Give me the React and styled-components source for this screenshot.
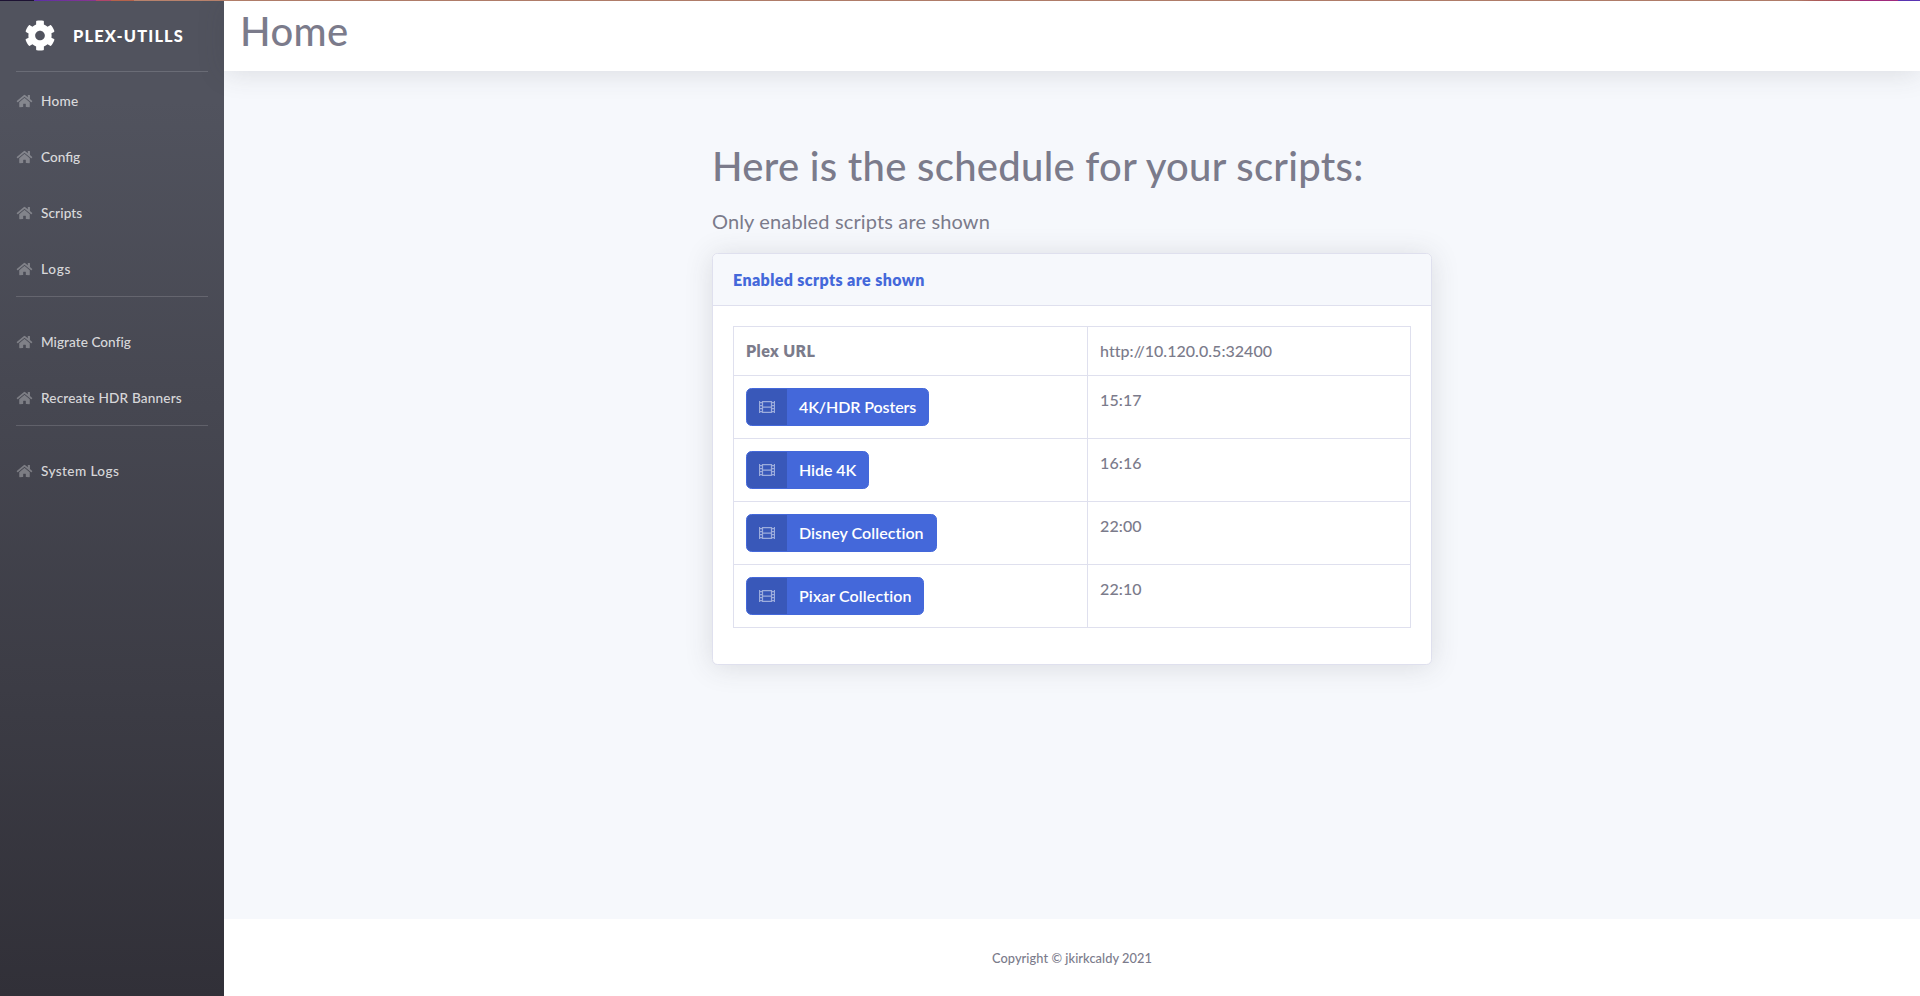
import React from 'react';
import styled, { createGlobalStyle } from 'styled-components';
import { FaCog, FaHome } from 'react-icons/fa';

const GlobalStyle = createGlobalStyle`
  *, *::before, *::after { box-sizing: border-box; }
  body {
    margin: 0;
    font-family: Lato, "Open Sans", sans-serif;
    font-size: 16px;
    font-weight: 500;
    line-height: 1.5;
    color: #7b7b8b;
    background: #f6f8fc;
  }
`;

const Label = styled.span`
  letter-spacing: ${({ $track = 0 }) => $track}px;
  margin-right: ${({ $track = 0 }) => -$track}px;
`;

const Page = styled.div`
  display: flex;
  flex-direction: column;
  height: 100vh;
  overflow: hidden;
`;

const AccentStrip = styled.div`
  flex: none;
  height: 1px;
  background: linear-gradient(
    to right,
    #1d1233 0 34px, #5b2fa8 34px, #8a3590 96px,
    #b0466a 96px 111px, #b5624b 111px 134px,
    #b8826c 134px 1796px, #b5605a 1816px, #b04a6a 1860px,
    #a82a80 1860px 1898px, #5b35b8 1898px
  );
`;

const Wrapper = styled.div`
  display: flex;
  flex: 1;
  min-height: 0;
`;

const Sidebar = styled.nav`
  width: 224px;
  flex: none;
  background: linear-gradient(180deg, #51535e 10%, #313038 100%);
`;

const Brand = styled.div`
  display: flex;
  align-items: center;
  height: 70px;
  padding: 0 0 1px 24px;
  color: #fff;
  font-weight: 900;
  font-size: 16.4px;
  line-height: 1;

  svg {
    width: 32px;
    height: 31px;
    margin-right: 17px;
  }

  span {
    padding-top: 2px;
  }
`;

const Divider = styled.hr`
  height: 1px;
  border: 0;
  margin: 0 16px ${({ $gap = 0 }) => $gap}px;
  background: rgba(255, 255, 255, 0.15);
`;

const NavLink = styled.a`
  display: flex;
  align-items: center;
  height: 56px;
  padding: 3px 16px 0;
  font-size: 13.6px;
  color: rgba(255, 255, 255, 0.8);

  svg {
    width: 17px;
    height: 14px;
    margin: 0 8px 2px 0;
    color: rgba(255, 255, 255, 0.3);
  }
`;

const Content = styled.div`
  display: flex;
  flex-direction: column;
  flex: 1;
`;

const Topbar = styled.header`
  flex: none;
  height: 70px;
  padding: 6px 16px;
  background: #fff;
  box-shadow: 0 2px 28px rgba(58, 59, 69, 0.15);
`;

const Title = styled.h1`
  margin: 0;
  font-size: 40px;
  font-weight: 500;
  line-height: 48px;
`;

const Main = styled.main`
  width: 720px;
  flex: 1;
  margin: 0 auto;
  padding-top: 71px;
`;

const Lead = styled.p`
  margin: 16px 0 17px;
  font-size: 20px;
  line-height: 30px;
  font-weight: 400;
`;

const Card = styled.section`
  height: 412px;
  border: 1px solid #dfe0ee;
  border-radius: 5.6px;
  background: #fff;
  box-shadow: 0 2px 28px rgba(58, 59, 69, 0.15);
`;

const CardHeader = styled.h6`
  display: flex;
  align-items: center;
  height: 52px;
  margin: 0;
  padding: 0 20px;
  border-bottom: 1px solid #dfe0ee;
  border-radius: 5px 5px 0 0;
  background: #f6f8fc;
  color: #4468da;
  font-size: 16px;
  font-weight: 800;
`;

const Schedule = styled.table`
  width: 678px;
  margin: 20px 0 0 20px;
  border-collapse: collapse;
  table-layout: fixed;
`;

const Cell = styled.td`
  width: ${({ $width }) => $width};
  height: ${({ $tall }) => ($tall ? 63 : 49)}px;
  padding: 12px;
  border: 1px solid #dfe0ee;
  vertical-align: top;
  font-weight: ${({ $bold }) => ($bold ? 800 : 500)};
`;

const ScriptButton = styled.button`
  display: flex;
  width: ${({ $width }) => $width}px;
  height: 38px;
  padding: 0;
  border: 1px solid #4468da;
  border-radius: 5.6px;
  overflow: hidden;
  background: #4468da;
  color: #fff;
  font: inherit;
  font-weight: 600;
  white-space: nowrap;
`;

const ButtonIcon = styled.span`
  display: flex;
  align-items: center;
  justify-content: center;
  width: 40px;
  height: 36px;
  background: rgba(0, 0, 0, 0.15);
  color: rgba(255, 255, 255, 0.5);
`;

const ButtonText = styled.span`
  padding: 6px 0 0 12px;
  line-height: 24px;
`;

const Footer = styled.footer`
  display: flex;
  align-items: center;
  justify-content: center;
  flex: none;
  height: 77px;
  padding-top: 1px;
  background: #fff;
  font-size: 12.8px;
  line-height: 1;
`;

const FilmIcon = () => (
  <svg width="16" height="12" viewBox="0 0 16 12" fill="none" stroke="currentColor" strokeWidth="1.25">
    <path d="M.5 0v12M15.5 0v12M3.5 .6h9v10.8h-9zM3.5 6h9M1 1.5h2M1 4.5h2M1 7.5h2M1 10.5h2M13 1.5h2M13 4.5h2M13 7.5h2M13 10.5h2" />
  </svg>
);

const navGroups = [
  [['Home', 0.3], ['Config', 0], ['Scripts', 0.12], ['Logs', 0.7]],
  [['Migrate Config', 0.04], ['Recreate HDR Banners', 0.17]],
  [['System Logs', 0.4]],
];

const scripts = [
  { name: '4K/HDR Posters', time: '15:17', width: 183, track: -0.1 },
  { name: 'Hide 4K', time: '16:16', width: 123, track: -0.06 },
  { name: 'Disney Collection', time: '22:00', width: 191, track: 0.06 },
  { name: 'Pixar Collection', time: '22:10', width: 178, track: 0.1 },
];

export default function App() {
  return (
    <Page>
      <GlobalStyle />
      <AccentStrip />
      <Wrapper>
        <Sidebar>
          <Brand>
            <FaCog />
            <Label $track={1.15}>PLEX-UTILLS</Label>
          </Brand>
          {navGroups.map((group, i) => (
            <React.Fragment key={i}>
              <Divider $gap={i ? 16 : 0} />
              {group.map(([name, track]) => (
                <NavLink key={name}>
                  <FaHome />
                  <Label $track={track}>{name}</Label>
                </NavLink>
              ))}
            </React.Fragment>
          ))}
        </Sidebar>
        <Content>
          <Topbar>
            <Title><Label $track={0.4}>Home</Label></Title>
          </Topbar>
          <Main>
            <Title><Label $track={0.28}>Here is the schedule for your scripts:</Label></Title>
            <Lead><Label $track={0.14}>Only enabled scripts are shown</Label></Lead>
            <Card>
              <CardHeader><Label $track={0.38}>Enabled scrpts are shown</Label></CardHeader>
              <Schedule>
                <tbody>
                  <tr>
                    <Cell $bold $width="354px"><Label $track={0.4}>Plex URL</Label></Cell>
                    <Cell><Label $track={0.04}>http://10.120.0.5:32400</Label></Cell>
                  </tr>
                  {scripts.map(({ name, time, width, track }) => (
                    <tr key={name}>
                      <Cell $tall>
                        <ScriptButton $width={width}>
                          <ButtonIcon><FilmIcon /></ButtonIcon>
                          <ButtonText><Label $track={track}>{name}</Label></ButtonText>
                        </ScriptButton>
                      </Cell>
                      <Cell $tall><Label $track={0.1}>{time}</Label></Cell>
                    </tr>
                  ))}
                </tbody>
              </Schedule>
            </Card>
          </Main>
          <Footer><Label $track={0.06}>Copyright © jkirkcaldy 2021</Label></Footer>
        </Content>
      </Wrapper>
    </Page>
  );
}
